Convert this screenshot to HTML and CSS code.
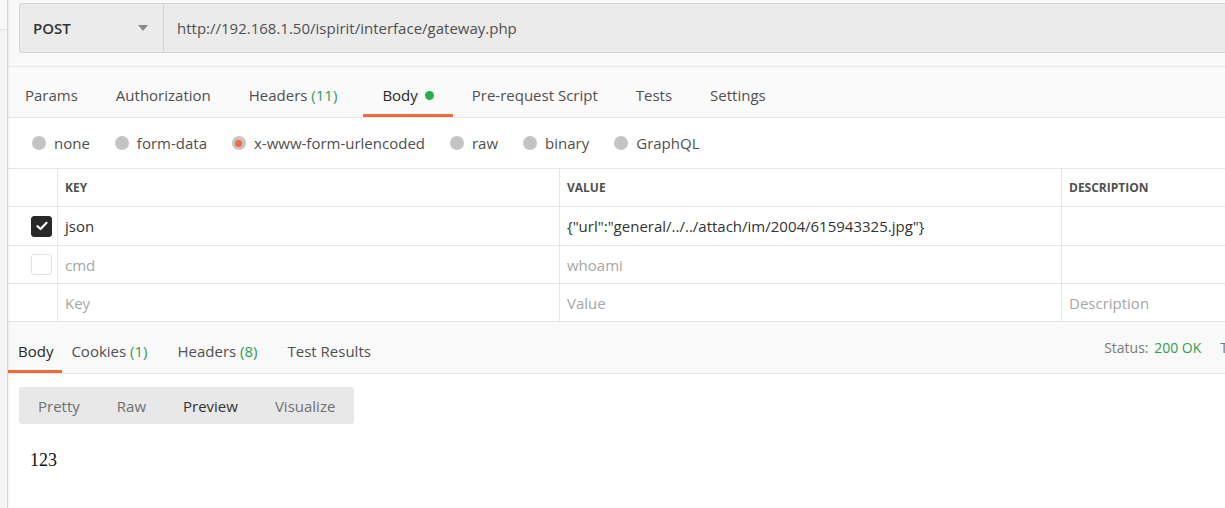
FILE: index.html
```html
<!DOCTYPE html>
<html>
<head>
<meta charset="utf-8">
<link rel="stylesheet" href="styles.css">
</head>
<body>
<div class="app">
  <div class="sidebar"><div class="sidebar-top"></div></div>
  <div class="main">
    <div class="urlbar">
      <div class="urlbox">
        <div class="method">
          <span>POST</span>
          <svg class="caret" width="10" height="6" viewBox="0 0 10 6"><path d="M0 0 L10 0 L5 6 Z" fill="#8a8a8a"/></svg>
        </div>
        <div class="url">http://192.168.1.50/ispirit/interface/gateway.php</div>
      </div>
    </div>
    <div class="tabs">
      <div class="tab">Params</div>
      <div class="tab">Authorization</div>
      <div class="tab">Headers <span class="count">(11)</span></div>
      <div class="tab active">Body<span class="dot"></span></div>
      <div class="tab">Pre-request Script</div>
      <div class="tab">Tests</div>
      <div class="tab">Settings</div>
    </div>
    <div class="radios">
      <div class="radio"><span class="circle"></span>none</div>
      <div class="radio"><span class="circle"></span>form-data</div>
      <div class="radio"><span class="circle on"></span>x-www-form-urlencoded</div>
      <div class="radio"><span class="circle"></span>raw</div>
      <div class="radio"><span class="circle"></span>binary</div>
      <div class="radio"><span class="circle"></span>GraphQL</div>
    </div>
    <div class="table">
      <div class="row head">
        <div class="cell chk"></div>
        <div class="cell key">KEY</div>
        <div class="cell val">VALUE</div>
        <div class="cell desc">DESCRIPTION</div>
      </div>
      <div class="row first">
        <div class="cell chk"><span class="checkbox checked"><svg width="12" height="10" viewBox="0 0 12 10"><path d="M1.5 5.2 L4.6 8 L10.5 1.8" fill="none" stroke="#fff" stroke-width="2.2" stroke-linecap="round" stroke-linejoin="round"/></svg></span></div>
        <div class="cell key">json</div>
        <div class="cell val">{"url":"general/../../attach/im/2004/615943325.jpg"}</div>
        <div class="cell desc"></div>
      </div>
      <div class="row muted">
        <div class="cell chk"><span class="checkbox"></span></div>
        <div class="cell key">cmd</div>
        <div class="cell val">whoami</div>
        <div class="cell desc"></div>
      </div>
      <div class="row muted">
        <div class="cell chk"></div>
        <div class="cell key">Key</div>
        <div class="cell val">Value</div>
        <div class="cell desc">Description</div>
      </div>
    </div>
    <div class="resp-tabs">
      <div class="rtab active">Body</div>
      <div class="rtab">Cookies <span class="count">(1)</span></div>
      <div class="rtab">Headers <span class="count">(8)</span></div>
      <div class="rtab">Test Results</div>
      <div class="status">Status: <span class="count">200 OK</span><span class="more">T</span></div>
    </div>
    <div class="resp-body">
      <div class="seg">
        <div class="seg-item">Pretty</div>
        <div class="seg-item">Raw</div>
        <div class="seg-item sel">Preview</div>
        <div class="seg-item">Visualize</div>
      </div>
      <div class="preview">123</div>
    </div>
  </div>
</div>
</body>
</html>
```

FILE: styles.css
```css
* { box-sizing: border-box; }
html, body { margin: 0; padding: 0; background: #fff; }
body {
  font-family: "Open Sans", "Noto Sans", sans-serif;
  font-size: 15px;
  color: #505050;
  width: 1225px;
  height: 508px;
  overflow: hidden;
}
.app { display: flex; height: 508px; }
.sidebar {
  width: 8px;
  flex: none;
  background: #f4f4f4;
  border-right: 1px solid #d6d6d6;
  box-shadow: 1px 0 2px rgba(0,0,0,0.06);
  position: relative;
  z-index: 1;
}
.sidebar-top { height: 30px; background: #f8f8f8; border-bottom: 1px solid #e2e2e2; }
.main { flex: 1; min-width: 0; display: flex; flex-direction: column; }

.urlbar {
  background: #f9f9f9;
  padding: 3px 0 13px 11px;
  border-bottom: 1px solid #ececec;
}
.urlbox {
  display: flex;
  height: 50px;
  width: 1220px;
  background: #ebebeb;
  border: 1px solid #d4d4d4;
  border-radius: 3px;
}
.method {
  width: 144px;
  flex: none;
  display: flex;
  align-items: center;
  justify-content: space-between;
  padding: 0 15px 0 13px;
  border-right: 1px solid #d4d4d4;
  font-weight: 600;
  color: #333;
}
.caret { display: block; }
.url { display: flex; align-items: center; padding-left: 13px; color: #505050; }

.tabs {
  display: flex;
  height: 51px;
  background: #fafafa;
  border-bottom: 1px solid #e6e6e6;
}
.tab {
  display: flex;
  align-items: center;
  padding: 8px 19px 0;
  color: #505050;
  border-bottom: 3px solid transparent;
  white-space: pre;
}
.tab:first-child { padding-left: 17px; }
.tab.active { border-bottom-color: #f26b3a; color: #282828; margin-left: 7px; }
.count { color: #2ba052; }
.dot {
  display: inline-block;
  width: 9px; height: 9px;
  border-radius: 50%;
  background: #26b047;
  margin-left: 7px;
  margin-top: 1px;
}

.radios {
  display: flex;
  align-items: center;
  height: 50px;
  padding-left: 24px;
  gap: 25px;
  background: #fff;
}
.radio { display: flex; align-items: center; color: #505050; }
.circle {
  width: 14px; height: 14px;
  border-radius: 50%;
  background: #c4c4c4;
  margin-right: 8px;
  position: relative;
}
.circle.on::after {
  content: "";
  position: absolute;
  left: 3.5px; top: 3.5px;
  width: 7px; height: 7px;
  border-radius: 50%;
  background: #f26b3a;
}

.table { border-top: 1px solid #e6e6e6; background: #fff; }
.row { display: flex; height: 38px; border-bottom: 1px solid #e6e6e6; }
.row.head { height: 38px; }
.row.first { height: 39px; }
.cell { display: flex; align-items: center; padding-left: 7px; border-right: 1px solid #e6e6e6; white-space: nowrap; overflow: hidden; color: #333; }
.cell.chk { width: 50px; flex: none; justify-content: flex-end; padding: 0 5px 0 0; }
.cell.key { width: 502px; flex: none; }
.cell.val { width: 502px; flex: none; }
.cell.desc { flex: 1; border-right: none; }
.row.head .cell { font-size: 12px; font-weight: 700; color: #505050; }
.row.muted .cell { color: #a6a6a6; }
.checkbox {
  width: 21px; height: 21px;
  border-radius: 3px;
  border: 1px solid #e2e2e2;
  display: flex; align-items: center; justify-content: center;
  background: #fff;
}
.checkbox.checked { background: #282828; border-color: #282828; }

.resp-tabs {
  display: flex;
  height: 52px;
  background: #f9f9f9;
  border-bottom: 1px solid #e6e6e6;
}
.rtab {
  display: flex;
  align-items: center;
  padding: 10px 15px 0;
  border-bottom: 3px solid transparent;
  white-space: pre;
  color: #505050;
}
.rtab.active { border-bottom-color: #f26b3a; color: #282828; padding-left: 10px; padding-right: 9px; }
.rtab:nth-child(2) { padding-left: 9px; }
.status {
  margin-left: auto;
  margin-right: -3px;
  display: flex;
  align-items: center;
  font-size: 14px;
  color: #7a7a7a;
  white-space: pre;
  padding-bottom: 1px;
}
.status .count { margin-left: 2px; }
.status .more { margin-left: 19px; }

.resp-body { padding: 13px 0 0 11px; }
.seg {
  display: inline-flex;
  height: 37px;
  background: #e8e8e8;
  border-radius: 3px;
  align-items: center;
  gap: 37px;
  padding: 0 19px 0 19px;
}
.seg-item { color: #707070; }
.seg-item.sel { color: #333; }
.preview {
  font-family: "Liberation Serif", "Times New Roman", serif;
  font-size: 18px;
  color: #111;
  padding: 26px 0 0 11px;
}
```
